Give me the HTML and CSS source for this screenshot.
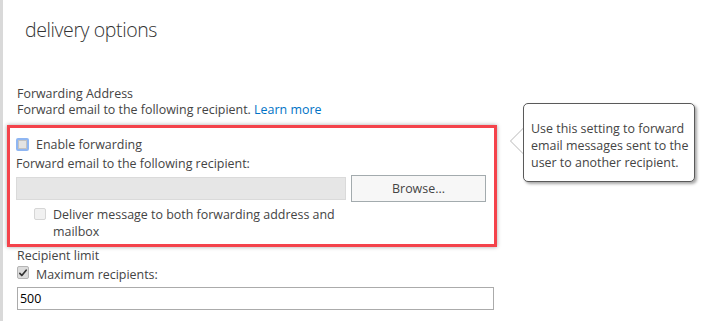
FILE: index.html
```html
<!DOCTYPE html>
<html lang="en">
<head>
<meta charset="utf-8">
<title>delivery options</title>
<link rel="stylesheet" href="styles.css">
</head>
<body>
<div class="page">
  <h1 class="title">delivery options</h1>

  <section class="section">
    <div class="label">Forwarding Address</div>
    <div class="label">Forward email to the following recipient. <a class="link" href="#">Learn more</a></div>
  </section>

  <div class="highlight">
    <label class="check-row first">
      <span class="cb cb-focus"></span>
      <span>Enable forwarding</span>
    </label>
    <div class="label sub">Forward email to the following recipient:</div>
    <div class="input-row">
      <div class="field field-disabled"></div>
      <button class="btn" type="button">Browse...</button>
    </div>
    <label class="check-row nested">
      <span class="cb cb-disabled"></span>
      <span>Deliver message to both forwarding address and<br>mailbox</span>
    </label>
  </div>

  <section class="section limit">
    <div class="label">Recipient limit</div>
    <label class="check-row">
      <span class="cb cb-checked">
        <svg viewBox="0 0 12 12" width="12" height="12"><path d="M2.2 6.4 L4.6 9 L9.8 2.6" fill="none" stroke="#333" stroke-width="2" stroke-linecap="round" stroke-linejoin="round"/></svg>
      </span>
      <span>Maximum recipients:</span>
    </label>
    <div class="field field-text">500</div>
  </section>

  <div class="tooltip">
    <span class="tip-arrow"></span>
    Use this setting to forward email messages sent to the user to another recipient.
  </div>
</div>
</body>
</html>
```

FILE: styles.css
```css
html, body {
  margin: 0;
  padding: 0;
  background: #ffffff;
}

body {
  font-family: "Open Sans", "Noto Sans", sans-serif;
  font-size: 12.45px;
  color: #444444;
}

.page {
  position: relative;
  height: 321px;
  box-sizing: border-box;
  border-left: 3px solid #d9d9d9;
  padding: 0 0 0 14px;
  width: 710px;
}

.title {
  margin: 0;
  padding: 16px 0 0 8px;
  height: 44px;
  box-sizing: border-box;
  font-weight: 300;
  font-size: 19.5px;
  letter-spacing: -0.4px;
  line-height: 28px;
  color: #333333;
}

.section {
  margin-top: 42px;
}

.label {
  line-height: 16px;
  height: 16px;
  white-space: nowrap;
}

.link {
  color: #0072c6;
  text-decoration: none;
}

.highlight {
  margin: 7px 0 0 -10px;
  width: 478px;
  border: 3px solid #f4434b;
  padding: 8px 0 4px 6px;
  box-shadow: 0 0 4px rgba(0, 0, 0, 0.35);
}

.check-row {
  display: flex;
  align-items: flex-start;
  gap: 7px;
  line-height: 17px;
}

.check-row.first {
  height: 19px;
}

.cb {
  flex: none;
  box-sizing: border-box;
  width: 13px;
  height: 13px;
  margin-top: 2px;
  border-radius: 2px;
}

.cb-focus {
  border: 2px solid #8fb6f2;
  background: #e3e3e3;
  box-shadow: inset 0 0 0 1px #c2c2c2;
}

.cb-disabled {
  width: 12px;
  height: 12px;
  border: 1px solid #d6d6d6;
  background: #f1f1f1;
}

.cb-checked {
  width: 12px;
  height: 13px;
  border: 1px solid #b5b5b5;
  background: #dcdcdc;
  display: flex;
  align-items: center;
  justify-content: center;
}

.cb-checked svg {
  display: block;
}

.sub {
  height: 20px;
  line-height: 17px;
}

.input-row {
  display: flex;
  align-items: center;
  gap: 5px;
  height: 27px;
}

.field {
  box-sizing: border-box;
}

.field-disabled {
  width: 330px;
  height: 23px;
  background: #e6e6e6;
  border: 1px solid #dadada;
}

.btn {
  box-sizing: border-box;
  width: 135px;
  height: 27px;
  padding: 0;
  background: #f7f7f7;
  border: 1px solid #a3abae;
  border-radius: 0;
  font-family: inherit;
  font-size: 12.45px;
  color: #444444;
}

.check-row.nested {
  margin: 4px 0 0 18px;
  line-height: 17px;
}

.limit {
  margin-top: 1px;
}

.limit .check-row {
  margin-top: 2px;
  height: 21px;
}

.limit .cb {
  margin-top: 0;
}

.field-text {
  width: 477px;
  height: 23px;
  border: 1px solid #ababab;
  padding: 0 0 0 2px;
  line-height: 21px;
  color: #000000;
}

.tooltip {
  position: absolute;
  left: 520px;
  top: 103px;
  width: 172px;
  height: 79px;
  box-sizing: border-box;
  padding: 16px 4px 0 7px;
  border: 1px solid #5a5a5a;
  border-radius: 5px;
  background: #ffffff;
  box-shadow: 2px 2px 3px rgba(0, 0, 0, 0.35);
  line-height: 17px;
  color: #444444;
}

.tip-arrow {
  position: absolute;
  left: -14px;
  top: 24px;
  width: 0;
  height: 0;
  border-top: 13px solid transparent;
  border-bottom: 13px solid transparent;
  border-right: 13px solid #b8b8b8;
}

.tip-arrow::after {
  content: "";
  position: absolute;
  left: 1px;
  top: -12px;
  border-top: 12px solid transparent;
  border-bottom: 12px solid transparent;
  border-right: 12px solid #ffffff;
}
```
